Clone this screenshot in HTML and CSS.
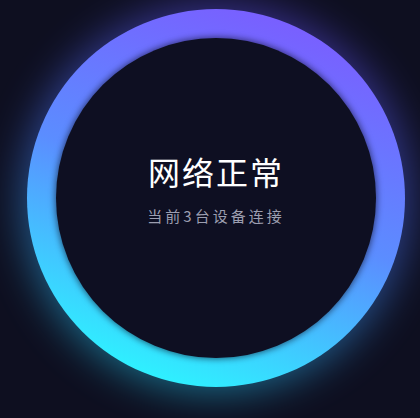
FILE: index.html
```html
<!DOCTYPE html>
<html lang="zh-CN">
<head>
<meta charset="utf-8">
<link rel="stylesheet" href="styles.css">
</head>
<body>
<main class="stage">
  <div class="ring">
    <div class="core">
      <h1 class="title">网络正常</h1>
      <p class="subtitle">当前3台设备连接</p>
    </div>
  </div>
</main>
</body>
</html>
```
FILE: styles.css
```css
html {
  background: #0e0f20;
}
html, body {
  margin: 0;
  padding: 0;
  width: 420px;
  height: 418px;
  overflow: hidden;
  font-family: "Noto Sans CJK SC", "Noto Sans", sans-serif;
}
.stage {
  padding: 9px 0 0 27px;
}
.ring {
  position: relative;
  width: 378px;
  height: 378px;
  border-radius: 50%;
  padding: 29px;
  box-sizing: border-box;
  background: linear-gradient(200deg, #7b5cff 8%, #5b8dff 50%, #2bf8ff 92%);
}
.ring::before {
  content: "";
  position: absolute;
  inset: -4px;
  border-radius: 50%;
  background: linear-gradient(200deg, #6a4cff 8%, #4a7dff 50%, #1ee8ff 92%);
  filter: blur(20px);
  opacity: 0.5;
  z-index: -1;
}
.core {
  width: 100%;
  height: 100%;
  border-radius: 50%;
  background: #0e0f22;
  box-shadow: 0 0 6px 1px rgba(10, 11, 30, 0.6);
  display: flex;
  flex-direction: column;
  align-items: center;
  padding-top: 113px;
  box-sizing: border-box;
}
.title {
  margin: 0;
  font-size: 32px;
  font-weight: 400;
  letter-spacing: 2px;
  color: #ffffff;
  line-height: 40px;
}
.subtitle {
  margin: 14px 0 0;
  font-size: 15px;
  letter-spacing: 3px;
  color: #9c9eb0;
  line-height: 22px;
}
```
